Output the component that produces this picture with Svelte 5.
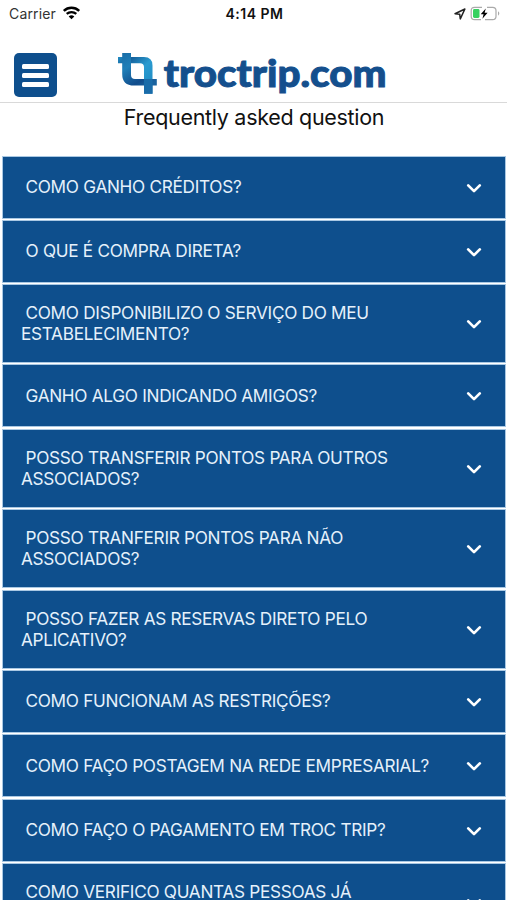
<script lang="ts">
	const questions: string[][] = [
		['COMO GANHO CRÉDITOS?'],
		['O QUE É COMPRA DIRETA?'],
		['COMO DISPONIBILIZO O SERVIÇO DO MEU', 'ESTABELECIMENTO?'],
		['GANHO ALGO INDICANDO AMIGOS?'],
		['POSSO TRANSFERIR PONTOS PARA OUTROS', 'ASSOCIADOS?'],
		['POSSO TRANFERIR PONTOS PARA NÃO', 'ASSOCIADOS?'],
		['POSSO FAZER AS RESERVAS DIRETO PELO', 'APLICATIVO?'],
		['COMO FUNCIONAM AS RESTRIÇÕES?'],
		['COMO FAÇO POSTAGEM NA REDE EMPRESARIAL?'],
		['COMO FAÇO O PAGAMENTO EM TROC TRIP?'],
		['COMO VERIFICO QUANTAS PESSOAS JÁ', '']
	];
</script>

<div class="screen">
	<div class="status-bar">
		<div class="carrier">
			<span>Carrier</span>
			<svg width="19" height="14" viewBox="0 0 18 14">
				<path d="M1.3 4.9C5.7.8 12.3.8 16.7 4.9" fill="none" stroke="#000" stroke-width="2.5" />
				<path d="M4.2 7.9C6.9 5.5 11.1 5.5 13.8 7.9" fill="none" stroke="#000" stroke-width="2.3" />
				<path d="M9 13.3 6.2 10.4Q9 8.2 11.8 10.4Z" />
			</svg>
		</div>
		<div class="time">4:14 PM</div>
		<div class="battery">
			<svg width="12" height="12" viewBox="0 0 12 12">
				<path d="M1 5.7 10.9 1 6.3 10.9 5.7 6.2Z" fill="none" stroke="#222" stroke-width="1.5" stroke-linejoin="round" />
			</svg>
			<svg width="31" height="16" viewBox="0 0 31 16">
				<path d="M12 1.3H4.6Q1.2 1.3 1.2 4.7V10.3Q1.2 13.7 4.6 13.7H11M17 1.3H22.6Q26 1.3 26 4.7V10.3Q26 13.7 22.6 13.7H15" fill="none" stroke="#aaa" stroke-width="1.2" />
				<path d="M28 5.3Q30.6 7.5 28 9.7Z" fill="#aaa" />
				<rect x="3" y="3" width="6.5" height="9" rx="1.4" fill="#36d160" />
				<path d="M15.8 2.5 10.7 8.3H13.6L12.4 12.8 17.6 6.8H14.6Z" />
			</svg>
		</div>
	</div>

	<header>
		<button class="menu" aria-label="Menu">
			<span></span>
			<span></span>
			<span></span>
		</button>
		<svg class="logo" width="272" height="50" viewBox="0 0 272 50">
			<defs>
				<linearGradient id="mark" gradientUnits="userSpaceOnUse" x1="0" y1="8" x2="34" y2="43">
					<stop offset="0" stop-color="#2189c0" />
					<stop offset="0.2" stop-color="#15619c" />
					<stop offset="0.5" stop-color="#2a9bd0" />
					<stop offset="0.75" stop-color="#2391c8" />
					<stop offset="1" stop-color="#1c79b5" />
				</linearGradient>
				<linearGradient id="side" gradientUnits="userSpaceOnUse" x1="4" y1="4" x2="26" y2="38">
					<stop offset="0" stop-color="#1a6ea8" />
					<stop offset="0.35" stop-color="#1f7fb8" />
					<stop offset="0.8" stop-color="#114c8b" />
					<stop offset="1" stop-color="#1a639f" />
				</linearGradient>
			</defs>
			<path d="M0 7H26Q34.5 7 34.5 15.5V43.7H26V17Q26 13.2 22 13.2H0Z" fill="url(#mark)" />
			<path d="M4.2 3H13V25Q13 29 17 29H38.8V35.6H16Q4.2 35.6 4.2 24Z" fill="url(#side)" />
			<path d="M26 29H34.5V43.7H26Z" fill="#1a6ca9" />
			<text x="45.8" y="36.7" textLength="222.6" lengthAdjust="spacingAndGlyphs">troctrip.com</text>
		</svg>
	</header>

	<h1>Frequently asked question</h1>

	<div class="list">
		{#each questions as lines}
			<div class="item" class:tall={lines.length > 1}>
				<div class="question">
					{#each lines as line, i}
						<span class:first={i === 0}>{line}</span>
					{/each}
				</div>
				<svg width="16" height="11" viewBox="0 0 16 11">
					<path d="M2.2 2.4 8 8.1 13.8 2.4" />
				</svg>
			</div>
		{/each}
	</div>
</div>

<style>
	:global(body) {
		background: #fff;
		overflow: hidden;
	}

	.screen {
		width: 507px;
		height: 900px;
		overflow: hidden;
		background: #fff;
		font-family: Inter, 'Liberation Sans', sans-serif;
		color: #111;
	}

	.status-bar {
		display: grid;
		grid-template-columns: 1fr auto 1fr;
		align-items: center;
		height: 27px;
		padding: 0 6px 0 9px;
		box-sizing: border-box;
		font-size: 14px;
	}

	.carrier {
		display: flex;
		align-items: center;
		gap: 6px;
		color: #333;
		letter-spacing: 0.15px;
	}

	.carrier svg {
		margin-top: -2px;
	}

	.time {
		font-weight: 600;
		letter-spacing: 0.5px;
		margin-right: 1px;
	}

	.battery {
		display: flex;
		justify-content: flex-end;
		align-items: center;
		gap: 4px;
	}

	header {
		display: flex;
		height: 75px;
		padding: 0 14px;
		border-bottom: 1px solid #d9d9d9;
	}

	.menu {
		display: flex;
		flex-direction: column;
		align-items: center;
		justify-content: center;
		gap: 4px;
		width: 43px;
		height: 44px;
		margin-top: 26.4px;
		padding: 0;
		border: 0;
		border-radius: 5px;
		background: #0e4f8d;
	}

	.menu span {
		width: 27px;
		height: 5px;
		border-radius: 1.5px;
		background: #fff;
	}

	.logo {
		margin: 23px 0 0 61px;
		overflow: visible;
	}

	.logo text {
		font-family: Lato, sans-serif;
		font-size: 38.5px;
		font-weight: 900;
		fill: #144f8d;
		stroke: #144f8d;
		stroke-width: 1px;
	}

	h1 {
		height: 52.5px;
		margin: 0;
		font-size: 21.5px;
		font-weight: 400;
		letter-spacing: -0.3px;
		line-height: 29px;
		text-align: center;
		text-indent: 1px;
	}

	.list {
		display: flex;
		flex-direction: column;
		gap: 1.3px;
		padding: 0 1.5px;
		background: #fff;
	}

	.item {
		display: flex;
		flex: none;
		align-items: center;
		justify-content: space-between;
		box-sizing: border-box;
		height: 63px;
		padding: 0 22.5px 0 18.5px;
		border: 1px solid #a9c8e3;
		background: #0e4f8d;
		color: #e5f1fb;
	}

	.item.tall {
		height: 79.1px;
	}

	.question {
		display: flex;
		flex-direction: column;
		margin-top: -1px;
		font-size: 17.2px;
		letter-spacing: -0.29px;
		line-height: 21px;
		white-space: nowrap;
	}

	.question span {
		min-height: 21px;
	}

	.question .first {
		padding-left: 4.5px;
	}

	.item svg {
		margin-top: 2px;
	}

	.item path {
		fill: none;
		stroke: #fff;
		stroke-width: 2.7;
		stroke-linecap: round;
		stroke-linejoin: round;
	}
</style>
